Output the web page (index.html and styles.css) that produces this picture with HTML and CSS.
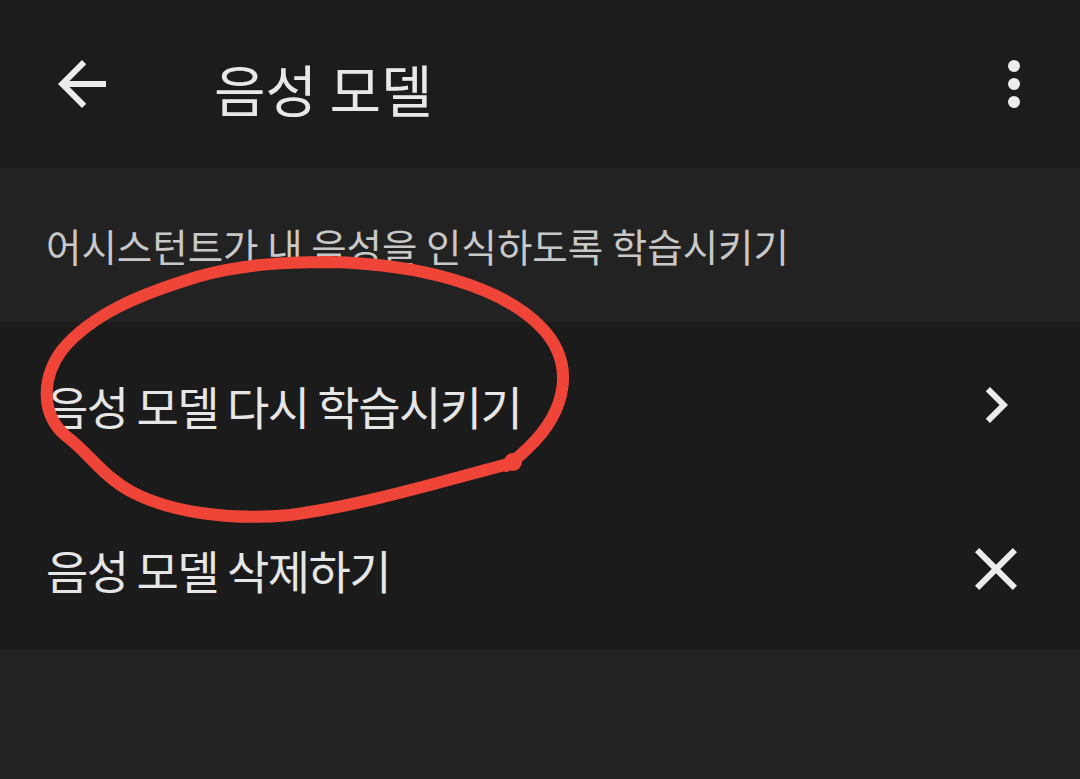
FILE: index.html
```html
<html>
<head>
    <link rel="stylesheet" href="styles.css">
</head>
<body>
    <div class="screen">
        <div class="app-bar">
            <button class="icon-btn back-btn" aria-label="뒤로">
                <svg viewBox="0 0 24 24" width="72" height="72"><path d="M20 11H7.83l5.59-5.59L12 4l-8 8 8 8 1.41-1.41L7.83 13H20v-2z"/></svg>
            </button>
            <h1 class="title">음성 모델</h1>
            <button class="icon-btn more-btn" aria-label="더보기">
                <svg viewBox="0 0 24 24" width="72" height="72"><circle cx="12" cy="6" r="2"/><circle cx="12" cy="12" r="2"/><circle cx="12" cy="18" r="2"/></svg>
            </button>
        </div>

        <div class="section-header">어시스턴트가 내 음성을 인식하도록 학습시키기</div>

        <div class="list-row">
            <span class="row-label">음성 모델 다시 학습시키기</span>
            <svg class="row-icon" viewBox="0 0 24 24" width="72" height="72"><path d="M10 6L8.59 7.41 13.17 12l-4.58 4.59L10 18l6-6z"/></svg>
        </div>
        <div class="list-row">
            <span class="row-label">음성 모델 삭제하기</span>
            <svg class="row-icon" viewBox="0 0 24 24" width="72" height="72"><path d="M19 6.41L17.59 5 12 10.59 6.41 5 5 6.41 10.59 12 5 17.59 6.41 19 12 13.41 17.59 19 19 17.59 13.41 12z"/></svg>
        </div>

        <!-- hand-drawn red circle marking the retrain row -->
        <svg class="scribble" viewBox="0 0 1080 779" width="1080" height="779">
            <path d="M512 463 C440 482, 360 506, 290 515 C230 521, 170 512, 132 492 C102 476, 88 452, 66 436 C42 416, 40 380, 62 350 C92 314, 140 294, 200 276 C240 265, 280 262, 330 262 C420 264, 500 286, 540 326 C576 362, 568 410, 528 448 C520 456, 514 461, 506 466"/>
            <circle cx="513" cy="462" r="9"/>
        </svg>
    </div>
</body>
</html>
```

FILE: styles.css
```css
body {
    margin: 0;
    background-color: #222222;
    font-family: "Noto Sans CJK KR", "Noto Sans", sans-serif;
    color: #e8e8e8;
}
.screen {
    position: relative;
    width: 1080px;
    height: 779px;
    overflow: hidden;
    background-color: #222222;
}
.app-bar {
    display: flex;
    align-items: center;
    height: 168px;
    padding: 0 30px 0 46px;
    box-sizing: border-box;
    background-color: #1c1c1c;
}
.icon-btn {
    width: 72px;
    height: 72px;
    padding: 0;
    border: none;
    background: none;
    display: flex;
}
.icon-btn svg, .row-icon {
    fill: #ececec;
}
.title {
    flex: 1;
    margin: 0 0 0 96px;
    font-size: 56px;
    font-weight: 400;
    line-height: 1;
    color: #e8e8e8;
    padding-top: 8px;
}
.section-header {
    height: 154px;
    display: flex;
    align-items: center;
    padding: 0 46px;
    font-size: 38.5px;
    color: #c8c8c8;
    background-color: #222222;
}
.list-row {
    display: flex;
    align-items: center;
    justify-content: space-between;
    height: 165px;
    padding: 0 48px 0 46px;
    background-color: #1b1b1b;
    border-bottom: 1px solid #171717;
}
.list-row + .list-row {
    height: 162px;
    border-bottom: none;
}
.row-label {
    font-size: 46px;
    letter-spacing: -1.5px;
    color: #e6e6e6;
}
.scribble {
    position: absolute;
    top: 0;
    left: 0;
    pointer-events: none;
}
.scribble path {
    fill: none;
    stroke: #ef4438;
    stroke-width: 12;
    stroke-linecap: round;
    stroke-linejoin: round;
}
.scribble circle {
    fill: #ef4438;
}
```
